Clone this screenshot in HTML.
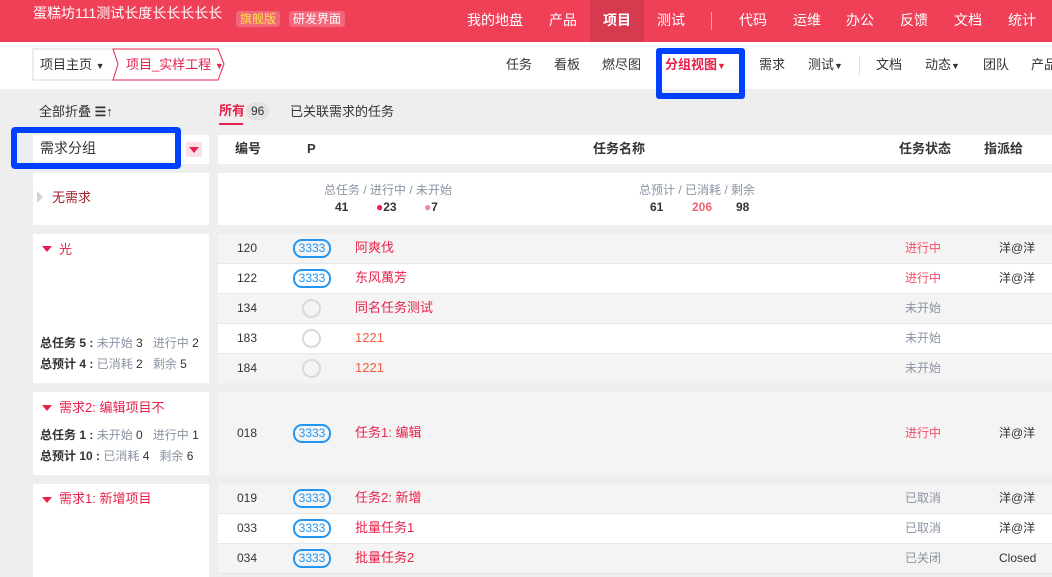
<!DOCTYPE html>
<html><head><meta charset="utf-8"><style>
*{margin:0;padding:0;box-sizing:border-box}
body{width:1052px;height:577px;overflow:hidden;background:#eeeeee;font-family:"Liberation Sans","Noto Sans CJK SC",sans-serif;font-size:13px;color:#333;position:relative;line-height:1.2}
.a{position:absolute;white-space:nowrap}
.top{left:0;top:0;width:1052px;height:42px;background:#ef4058}
.sub{left:0;top:42px;width:1052px;height:47px;background:#fff}
.w{color:#fff;font-size:14px}
.tag{font-size:12px;padding:1px 4px;border-radius:3px;background:rgba(255,255,255,.2)}
.box{background:#fff}
.row{left:218px;width:834px;height:30px;border-bottom:1px solid #e8e8e8}
.g{background:#f4f4f4}
.pill{border:2px solid #2196f3;border-radius:9px;color:#2196f3;font-size:12px;width:38px;height:19px;line-height:15px;text-align:center}
.circ{width:19px;height:19px;border:2px solid #d6d9de;border-radius:50%}
.red{color:#e8214b}
.gray{color:#8a93a3}
.tri{width:0;height:0;border-left:5px solid transparent;border-right:5px solid transparent;border-top:6px solid #e8214b}
</style></head><body>
<div class="a top"></div>
<div class="a w" style="left:33px;top:5px;font-size:14px">蛋糕坊111测试长度长长长长长</div>
<div class="a tag" style="left:236px;top:11px;color:#ffe14a">旗舰版</div>
<div class="a tag" style="left:289px;top:11px;color:#fff">研发界面</div>
<div class="a" style="left:590px;top:0;width:54px;height:42px;background:#d63a4e"></div>
<div class="a w" style="left:467px;top:12px">我的地盘</div>
<div class="a w" style="left:549px;top:12px">产品</div>
<div class="a w" style="left:603px;top:12px;font-weight:bold">项目</div>
<div class="a w" style="left:657px;top:12px">测试</div>
<div class="a" style="left:711px;top:12px;width:1px;height:18px;background:#f5a0ac"></div>
<div class="a w" style="left:739px;top:12px">代码</div>
<div class="a w" style="left:793px;top:12px">运维</div>
<div class="a w" style="left:846px;top:12px">办公</div>
<div class="a w" style="left:900px;top:12px">反馈</div>
<div class="a w" style="left:954px;top:12px">文档</div>
<div class="a w" style="left:1008px;top:12px">统计</div>
<div class="a sub"></div>
<svg class="a" style="left:32px;top:48px" width="200" height="33"><path d="M1 1H106L112 16L106 32H1Z" fill="#fff" stroke="#d3d8e0"/><path d="M81 1H186L192 16L186 32H81L86 16Z" fill="#fff" stroke="#e8214b"/></svg>
<div class="a" style="left:40px;top:57px;font-size:13px">项目主页 <span style="font-size:9px">▼</span></div>
<div class="a red" style="left:126px;top:57px;font-size:13px">项目_实样工程 <span style="font-size:9px">▼</span></div>
<div class="a" style="left:506px;top:57px">任务</div>
<div class="a" style="left:554px;top:57px">看板</div>
<div class="a" style="left:602px;top:57px">燃尽图</div>
<div class="a red" style="left:665px;top:57px;font-weight:bold">分组视图<span style="font-size:9px">▼</span></div>
<div class="a" style="left:656px;top:48px;width:89px;height:51px;border:6px solid #0041ff;border-radius:3px"></div>
<div class="a" style="left:759px;top:57px">需求</div>
<div class="a" style="left:808px;top:57px">测试<span style="font-size:9px">▼</span></div>
<div class="a" style="left:859px;top:57px;width:1px;height:18px;background:#ddd"></div>
<div class="a" style="left:876px;top:57px">文档</div>
<div class="a" style="left:925px;top:57px">动态<span style="font-size:9px">▼</span></div>
<div class="a" style="left:983px;top:57px">团队</div>
<div class="a" style="left:1031px;top:57px">产品</div>

<div class="a" style="left:39px;top:104px">全部折叠 <span style="font-weight:bold">☰↑</span></div>
<div class="a red" style="left:219px;top:103px;font-weight:bold">所有</div>
<div class="a" style="left:219px;top:123px;width:24px;height:2px;background:#e8214b"></div>
<div class="a" style="left:246px;top:102px;background:#e2e2e2;border-radius:9px;padding:2px 5px;font-size:12px">96</div>
<div class="a" style="left:290px;top:104px">已关联需求的任务</div>

<div class="a box" style="left:33px;top:135px;width:176px;height:29px"></div>
<div class="a" style="left:40px;top:140px;font-size:14px">需求分组</div>
<div class="a" style="left:186px;top:142px;width:16px;height:15px;background:#fbe1e6"></div>
<div class="a tri" style="left:189px;top:147px"></div>
<div class="a" style="left:11px;top:127px;width:170px;height:42px;border:6px solid #0041ff;border-radius:4px"></div>

<div class="a box" style="left:218px;top:135px;width:834px;height:29px"></div>
<div class="a" style="left:235px;top:141px;font-weight:bold">编号</div>
<div class="a" style="left:307px;top:141px;font-weight:bold">P</div>
<div class="a" style="left:593px;top:141px;font-weight:bold">任务名称</div>
<div class="a" style="left:899px;top:141px;font-weight:bold">任务状态</div>
<div class="a" style="left:984px;top:141px;font-weight:bold">指派给</div>

<div class="a box" style="left:33px;top:173px;width:176px;height:52px"></div>
<div class="a" style="left:37px;top:191px;border-top:6px solid transparent;border-bottom:6px solid transparent;border-left:6px solid #ccd1da"></div>
<div class="a" style="left:52px;top:190px;color:#a0222e">无需求</div>
<div class="a box" style="left:218px;top:173px;width:834px;height:52px"></div>
<div class="a gray" style="left:324px;top:183px;font-size:12px">总任务 / 进行中 / 未开始</div>
<div class="a" style="left:335px;top:200px;font-size:12px;font-weight:bold">41</div>
<div class="a" style="left:376px;top:200px;font-size:12px;font-weight:bold"><span style="color:#e8214b">●</span>23</div>
<div class="a" style="left:424px;top:200px;font-size:12px;font-weight:bold"><span style="color:#f08a9c">●</span>7</div>
<div class="a gray" style="left:639px;top:183px;font-size:12px">总预计 / 已消耗 / 剩余</div>
<div class="a" style="left:650px;top:200px;font-size:12px;font-weight:bold">61</div>
<div class="a" style="left:692px;top:200px;font-size:12px;font-weight:bold;color:#f06070">206</div>
<div class="a" style="left:736px;top:200px;font-size:12px;font-weight:bold">98</div>

<div class="a box" style="left:33px;top:234px;width:176px;height:149px"></div>
<div class="a tri" style="left:42px;top:246px"></div>
<div class="a red" style="left:59px;top:242px">光</div>
<div class="a" style="left:40px;top:336px;font-size:12px"><b>总任务 5 :</b> <span class="gray">未开始</span> 3 &nbsp; <span class="gray">进行中</span> 2</div>
<div class="a" style="left:40px;top:357px;font-size:12px"><b>总预计 4 :</b> <span class="gray">已消耗</span> 2 &nbsp; <span class="gray">剩余</span> 5</div>

<div class="a box" style="left:33px;top:392px;width:176px;height:83px"></div>
<div class="a tri" style="left:42px;top:405px"></div>
<div class="a red" style="left:59px;top:400px">需求2: 编辑项目不</div>
<div class="a" style="left:40px;top:428px;font-size:12px"><b>总任务 1 :</b> <span class="gray">未开始</span> 0 &nbsp; <span class="gray">进行中</span> 1</div>
<div class="a" style="left:40px;top:449px;font-size:12px"><b>总预计 10 :</b> <span class="gray">已消耗</span> 4 &nbsp; <span class="gray">剩余</span> 6</div>

<div class="a box" style="left:33px;top:484px;width:176px;height:93px"></div>
<div class="a tri" style="left:42px;top:497px"></div>
<div class="a red" style="left:59px;top:491px">需求1: 新增项目</div>

<div class="a row g" style="top:234px"></div>
<div class="a row" style="top:264px;background:#fff"></div>
<div class="a row g" style="top:294px"></div>
<div class="a row" style="top:324px;background:#fff"></div>
<div class="a row g" style="top:354px;height:29px;border:0"></div>
<div class="a row g" style="top:392px;height:83px;border:0"></div>
<div class="a row g" style="top:484px"></div>
<div class="a row" style="top:514px;background:#fff"></div>
<div class="a row g" style="top:544px"></div>

<div class="a" style="left:237px;top:241px;font-size:12px">120</div><div class="a pill" style="left:293px;top:239px">3333</div><div class="a red" style="left:355px;top:240px">阿爽伐</div><div class="a" style="left:905px;top:241px;font-size:12px;color:#f0506a">进行中</div><div class="a" style="left:999px;top:241px;font-size:12px">洋@洋</div>
<div class="a" style="left:237px;top:271px;font-size:12px">122</div><div class="a pill" style="left:293px;top:269px">3333</div><div class="a red" style="left:355px;top:270px">东风萬芳</div><div class="a" style="left:905px;top:271px;font-size:12px;color:#f0506a">进行中</div><div class="a" style="left:999px;top:271px;font-size:12px">洋@洋</div>
<div class="a" style="left:237px;top:301px;font-size:12px">134</div><div class="a circ" style="left:302px;top:299px"></div><div class="a red" style="left:355px;top:300px">同名任务测试</div><div class="a gray" style="left:905px;top:301px;font-size:12px">未开始</div>
<div class="a" style="left:237px;top:331px;font-size:12px">183</div><div class="a circ" style="left:302px;top:329px"></div><div class="a" style="left:355px;top:330px;color:#f05a3c">1221</div><div class="a gray" style="left:905px;top:331px;font-size:12px">未开始</div>
<div class="a" style="left:237px;top:361px;font-size:12px">184</div><div class="a circ" style="left:302px;top:359px"></div><div class="a" style="left:355px;top:360px;color:#f05a3c">1221</div><div class="a gray" style="left:905px;top:361px;font-size:12px">未开始</div>
<div class="a" style="left:237px;top:426px;font-size:12px">018</div><div class="a pill" style="left:293px;top:424px">3333</div><div class="a red" style="left:355px;top:425px">任务1: 编辑</div><div class="a" style="left:905px;top:426px;font-size:12px;color:#f0506a">进行中</div><div class="a" style="left:999px;top:426px;font-size:12px">洋@洋</div>
<div class="a" style="left:237px;top:491px;font-size:12px">019</div><div class="a pill" style="left:293px;top:489px">3333</div><div class="a red" style="left:355px;top:490px">任务2: 新增</div><div class="a gray" style="left:905px;top:491px;font-size:12px">已取消</div><div class="a" style="left:999px;top:491px;font-size:12px">洋@洋</div>
<div class="a" style="left:237px;top:521px;font-size:12px">033</div><div class="a pill" style="left:293px;top:519px">3333</div><div class="a red" style="left:355px;top:520px">批量任务1</div><div class="a gray" style="left:905px;top:521px;font-size:12px">已取消</div><div class="a" style="left:999px;top:521px;font-size:12px">洋@洋</div>
<div class="a" style="left:237px;top:551px;font-size:12px">034</div><div class="a pill" style="left:293px;top:549px">3333</div><div class="a red" style="left:355px;top:550px">批量任务2</div><div class="a gray" style="left:905px;top:551px;font-size:12px">已关闭</div><div class="a" style="left:999px;top:551px;font-size:12px">Closed</div>
</body></html>
